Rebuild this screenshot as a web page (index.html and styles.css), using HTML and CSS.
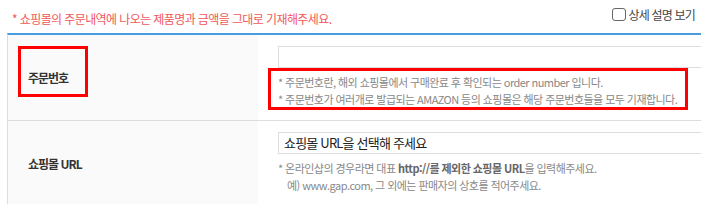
FILE: index.html
```html
<!DOCTYPE html>
<html lang="ko">
<head>
    <meta charset="UTF-8">
    <meta name="viewport" content="width=device-width, initial-scale=1.0">
    <title>주문 정보 입력</title>
    <link rel="stylesheet" href="styles.css">
</head>
<body>
    <!-- Top notice -->
    <div class="top-bar">
        <p class="notice">* 쇼핑몰의 주문내역에 나오는 제품명과 금액을 그대로 기재해주세요.</p>
        <label class="detail-toggle">
            <span class="check-box"></span>
            <span>상세 설명 보기</span>
        </label>
    </div>

    <!-- Order form table -->
    <div class="form-table">
        <div class="form-row">
            <div class="form-label">
                <span>주문번호</span>
                <div class="mark mark-label"></div>
            </div>
            <div class="form-field">
                <div class="text-input"></div>
                <div class="help">
                    <p>* 주문번호란, 해외 쇼핑몰에서 구매완료 후 확인되는 order number 입니다.</p>
                    <p>* 주문번호가 여러개로 발급되는 AMAZON 등의 쇼핑몰은 해당 주문번호들을 모두 기재합니다.</p>
                    <div class="mark mark-help"></div>
                </div>
            </div>
        </div>
        <div class="form-row">
            <div class="form-label">
                <span>쇼핑몰 URL</span>
            </div>
            <div class="form-field">
                <div class="text-input select-input">쇼핑몰 URL을 선택해 주세요</div>
                <div class="help">
                    <p>* 온라인샵의 경우라면 대표 <b>http://를 제외한 쇼핑몰 URL</b>을 입력해주세요.</p>
                    <p class="indent">예) www.gap.com, 그 외에는 판매자의 상호를 적어주세요.</p>
                </div>
            </div>
        </div>
    </div>
</body>
</html>
```

FILE: styles.css
```css
* {
    margin: 0;
    padding: 0;
    box-sizing: border-box;
}

html, body {
    overflow: hidden;
}

body {
    background: white;
    font-family: "Noto Sans CJK KR", "Noto Sans", sans-serif;
    color: #333;
}

.top-bar {
    display: flex;
    justify-content: space-between;
    align-items: center;
    height: 33px;
    padding: 0 6px 0 12px;
}

.notice {
    color: #f2585a;
    font-size: 12px;
    letter-spacing: -0.6px;
    margin-top: 4px;
}

.detail-toggle {
    display: flex;
    align-items: center;
    gap: 2px;
    font-size: 12px;
    letter-spacing: -0.8px;
    color: #444;
    align-self: flex-start;
    margin-top: 6px;
}

.check-box {
    width: 14px;
    height: 13px;
    border: 1px solid #666;
    border-radius: 3px;
    background: white;
}

.form-table {
    width: 720px;
    margin-left: 7px;
    border-top: 2px solid #4a9ce0;
    border-left: 1px solid #ddd;
}

.form-row {
    display: flex;
    border-bottom: 1px solid #ddd;
}

.form-label {
    position: relative;
    width: 250px;
    background: #fafafa;
    display: flex;
    align-items: center;
    padding-left: 20px;
    font-size: 12px;
    font-weight: bold;
    letter-spacing: -1px;
    color: #333;
}

.form-field {
    flex: 1;
    padding: 11px 0 12px 20px;
}

.text-input {
    height: 22px;
    border: 1px solid #ddd;
    background: white;
}

.select-input {
    font-size: 13px;
    letter-spacing: -0.8px;
    color: #222;
    padding-left: 5px;
    line-height: 20px;
}

.help {
    position: relative;
    margin-top: 6px;
    font-size: 11px;
    letter-spacing: -0.55px;
    line-height: 17px;
    color: #888;
    width: 410px;
}

.help b {
    color: #666;
}

.help .indent {
    padding-left: 9px;
}

/* red annotation boxes */
.mark {
    position: absolute;
    border: 3px solid #ff0000;
}

.mark-label {
    left: 10px;
    top: 11px;
    width: 70px;
    height: 51px;
}

.mark-help {
    left: -10px;
    top: -6px;
    width: 420px;
    height: 42px;
}
```
